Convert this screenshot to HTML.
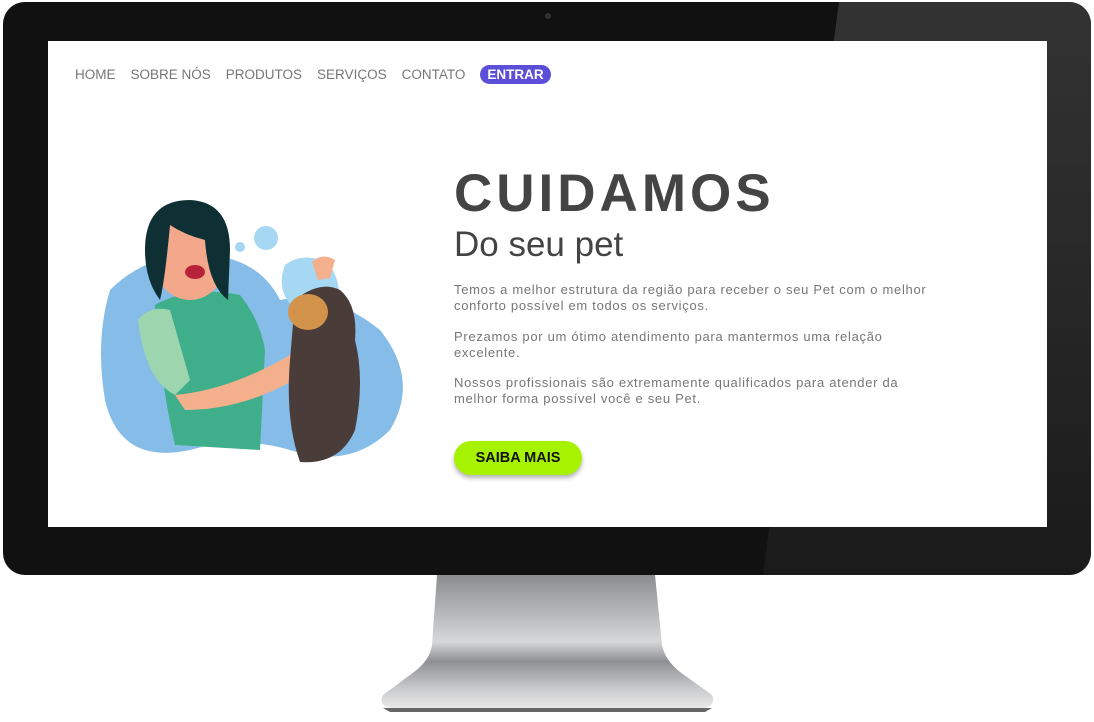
<!DOCTYPE html>
<html><head><style>
body{margin:0;width:1094px;height:722px;background:#fff;position:relative;overflow:hidden;font-family:"Liberation Sans",sans-serif}
.bez{position:absolute;left:3px;top:2px;width:1088px;height:573px;background:#111;border-radius:22px;overflow:hidden}
.glare{position:absolute;left:0;top:0;width:1088px;height:573px;background:linear-gradient(180deg,#333 0%,#2a2a2a 40%,#1a1a1a 100%);clip-path:polygon(836px 0,1088px 0,1088px 573px,760px 573px)}
.cam{position:absolute;left:542px;top:11px;width:6px;height:6px;border-radius:50%;background:#333}
.scr{position:absolute;left:48px;top:41px;width:999px;height:486px;background:#fff}
.nav{position:absolute;left:27px;top:24px;font-size:13.5px;color:#777;display:flex;gap:15px;align-items:center}
.nav .e{background:#5b4fd8;color:#fff;font-weight:bold;padding:2px 7px;border-radius:11px}
h1{position:absolute;left:406px;top:122px;margin:0;font-size:53px;font-weight:900;color:#444;letter-spacing:4px}
h2{position:absolute;left:406px;top:184px;margin:0;font-size:35px;font-weight:normal;color:#444}
p{position:absolute;left:406px;margin:0;font-size:13px;line-height:16px;color:#777;white-space:nowrap;letter-spacing:.7px}
.btn{position:absolute;left:406px;top:400px;width:128px;height:34px;border-radius:17px;background:#a6f200;font-weight:bold;font-size:14.5px;line-height:34px;text-align:center;color:#111;box-shadow:0 3px 5px rgba(0,0,0,.3)}
</style></head><body>
<svg style="position:absolute;left:0;top:560px" width="1094" height="162">
<defs><linearGradient id="g" x1="0" y1="0" x2="0" y2="1">
<stop offset="0" stop-color="#8c8d90"/><stop offset=".5" stop-color="#d6d7d9"/><stop offset=".65" stop-color="#8f9094"/><stop offset=".85" stop-color="#c8c9cb"/><stop offset="1" stop-color="#e8e8e8"/></linearGradient></defs>
<path d="M437 15 L655 15 L662 85 Q665 100 680 112 L712 135 Q716 145 705 148 L390 148 Q378 145 383 135 L414 112 Q430 100 432 85 Z" fill="url(#g)"/>
<path d="M383 148 L712 148 L705 152 L390 152 Z" fill="#666"/>
</svg>
<div class="bez"><div class="glare"></div><div class="cam"></div></div>
<div class="scr">
<div class="nav"><span>HOME</span><span>SOBRE NÓS</span><span>PRODUTOS</span><span>SERVIÇOS</span><span>CONTATO</span><span class="e">ENTRAR</span></div>
<svg style="position:absolute;left:42px;top:139px" width="330" height="290" viewBox="0 0 330 290">
<path d="M20 110 Q60 70 120 75 Q170 80 190 120 Q240 110 290 150 Q330 200 300 250 Q260 290 200 270 Q150 255 100 270 Q30 285 15 220 Q5 160 20 110Z" fill="#86bde8"/>
<path d="M195 85 Q215 70 240 85 Q255 110 245 130 L205 130 Q185 110 195 85Z" fill="#a6d8f4"/>
<circle cx="176" cy="58" r="12" fill="#a6d8f4"/><circle cx="150" cy="67" r="5" fill="#a6d8f4"/>
<path d="M65 125 Q100 105 150 115 Q170 140 175 170 L170 270 L85 265 Q70 200 65 125Z" fill="#3fae8a"/>
<path d="M48 140 Q60 125 80 130 L100 200 L85 215 Q55 200 48 140Z" fill="#9dd5ae"/>
<path d="M85 215 Q140 210 200 175 L220 190 Q160 230 95 230Z" fill="#f4b08d"/>
<ellipse cx="100" cy="75" rx="38" ry="45" fill="#f4a88b"/>
<path d="M55 70 Q55 20 100 20 Q140 22 140 70 L138 120 Q118 105 115 60 Q95 55 80 45 Q75 100 70 120 Q55 100 55 70Z" fill="#0e2f33"/>
<ellipse cx="105" cy="92" rx="10" ry="7" fill="#b8233a"/>
<path d="M205 120 Q230 100 250 110 Q268 125 265 160 Q275 200 265 250 Q250 285 210 282 Q195 240 200 180Z" fill="#4a3c38"/>
<ellipse cx="218" cy="132" rx="20" ry="18" fill="#d4934a"/>
<path d="M222 82 Q232 72 245 80 L240 98 L228 100 Z" fill="#f4b08d"/>
</svg>
<h1>CUIDAMOS</h1>
<h2>Do seu pet</h2>
<p style="top:241px">Temos a melhor estrutura da região para receber o seu Pet com o melhor<br>conforto possível em todos os serviços.</p>
<p style="top:288px">Prezamos por um ótimo atendimento para mantermos uma relação<br>excelente.</p>
<p style="top:334px">Nossos profissionais são extremamente qualificados para atender da<br>melhor forma possível você e seu Pet.</p>
<div class="btn">SAIBA MAIS</div>
</div>
</body></html>
